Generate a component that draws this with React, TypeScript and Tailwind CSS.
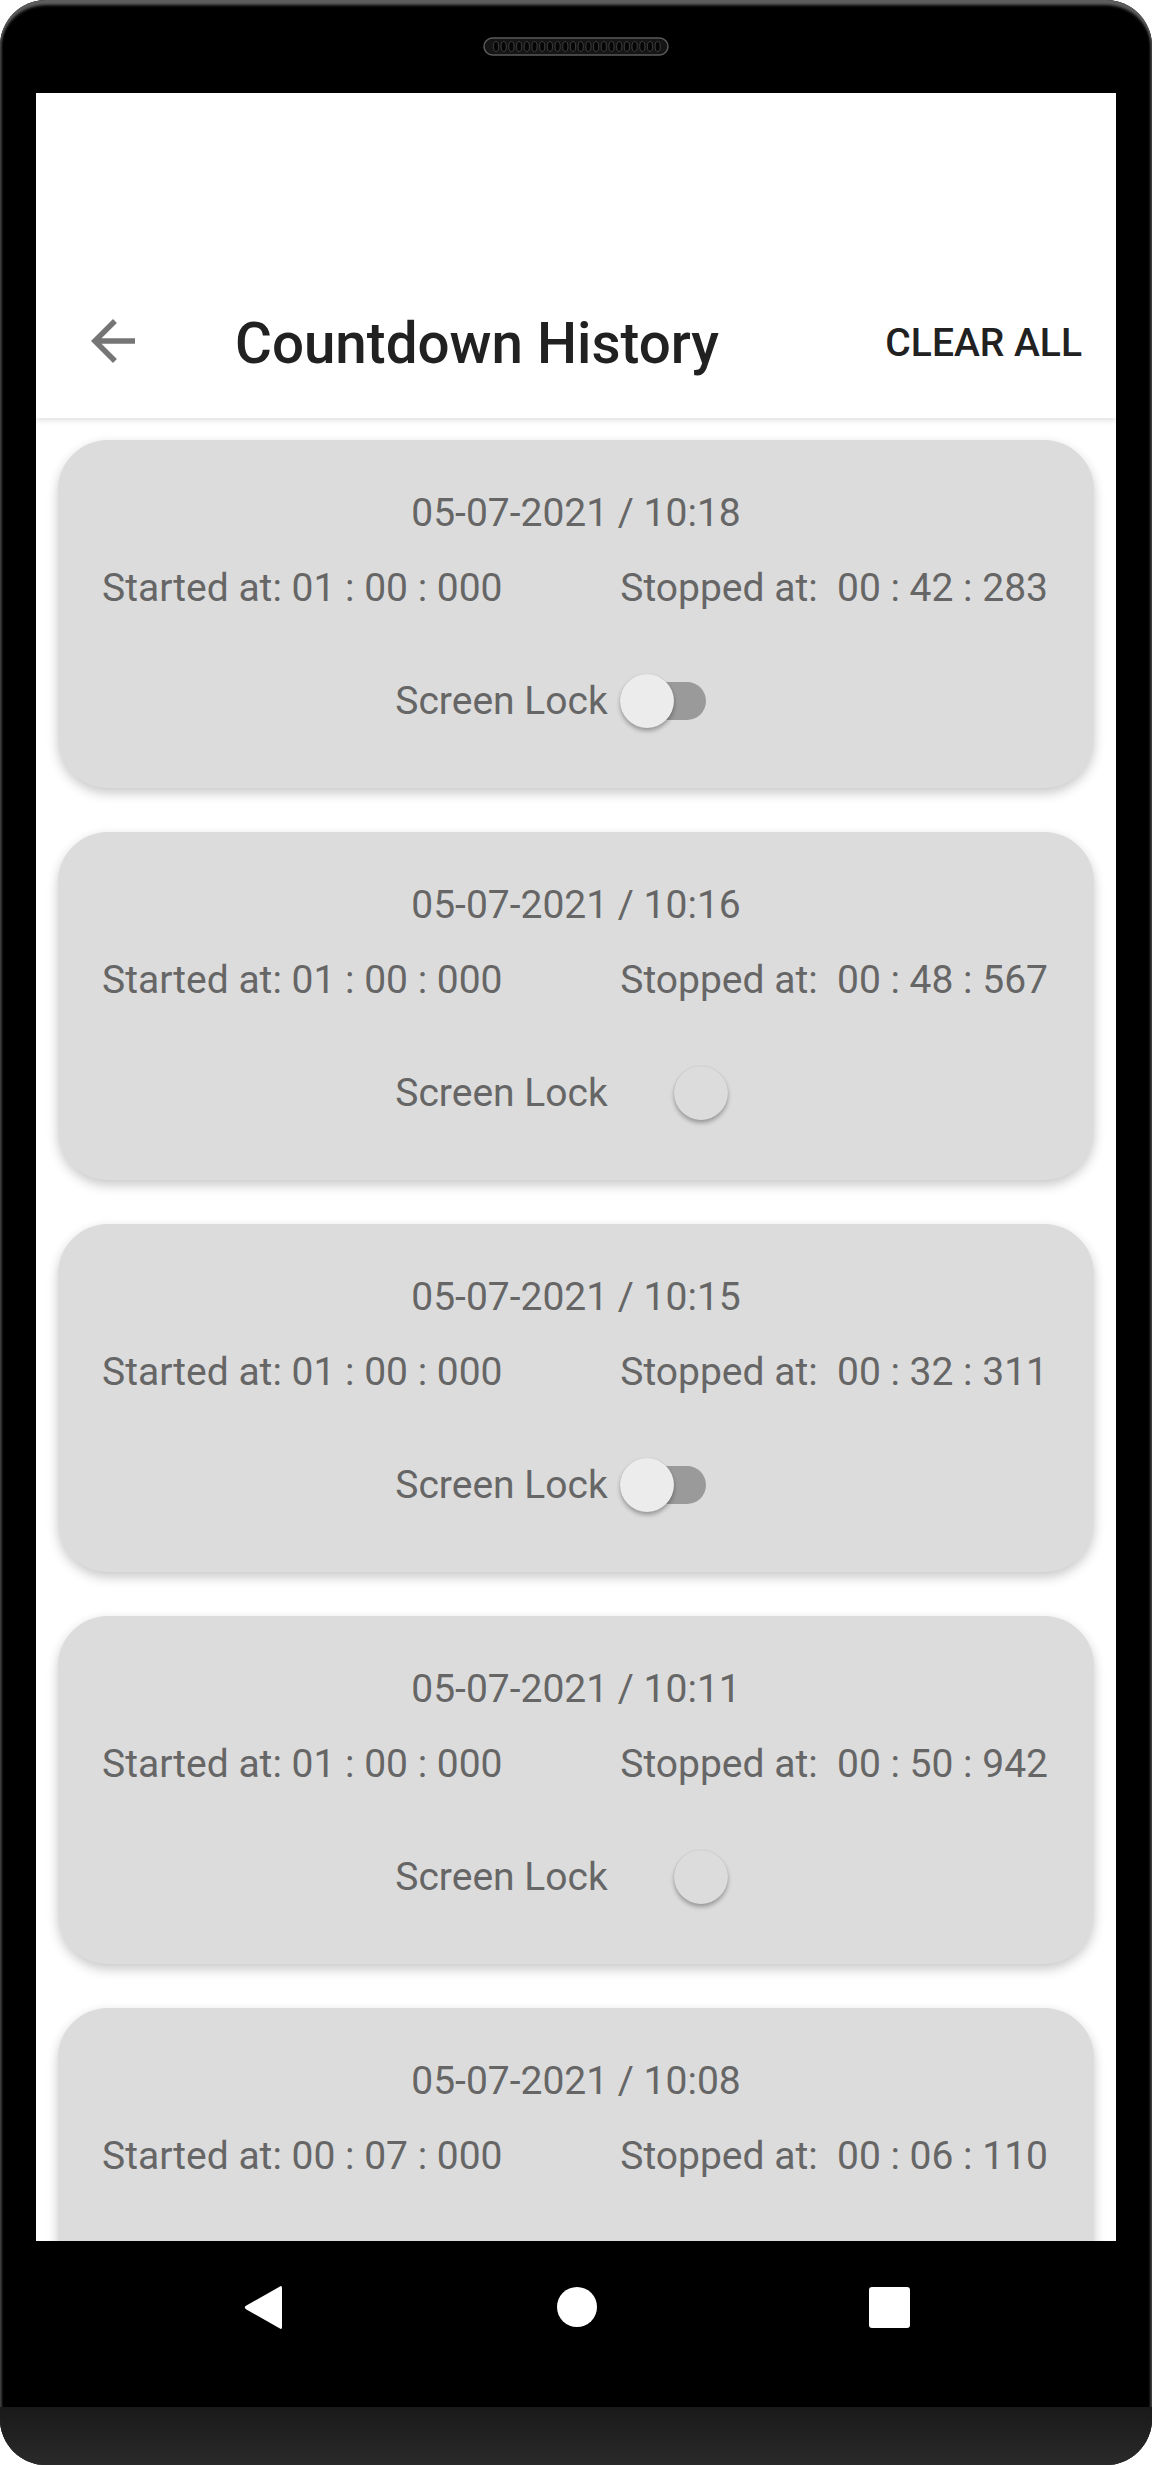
import React from "react";

type Entry = { time: string; start: string; stop: string; on: boolean };

const entries: Entry[] = [
  { time: "05-07-2021 / 10:18", start: "01 : 00 : 000", stop: "00 : 42 : 283", on: false },
  { time: "05-07-2021 / 10:16", start: "01 : 00 : 000", stop: "00 : 48 : 567", on: true },
  { time: "05-07-2021 / 10:15", start: "01 : 00 : 000", stop: "00 : 32 : 311", on: false },
  { time: "05-07-2021 / 10:11", start: "01 : 00 : 000", stop: "00 : 50 : 942", on: true },
  { time: "05-07-2021 / 10:08", start: "00 : 07 : 000", stop: "00 : 06 : 110", on: true },
];

function Speaker() {
  const holes = Array.from({ length: 22 }, (_, i) => i);
  return (
    <svg width="186" height="19" viewBox="0 0 186 19">
      <rect x="1" y="1" width="184" height="17" rx="8.5" fill="#151515" stroke="#5a5a5a" strokeWidth="1.5" />
      {holes.map((i) => (
        <ellipse key={i} cx={13 + i * 7.7} cy={9.5} rx={2.6} ry={5} fill="#050505" stroke="#4a4a4a" strokeWidth="0.8" />
      ))}
    </svg>
  );
}

function Toggle({ on }: { on: boolean }) {
  return (
    <div className="relative h-[54px] w-[149px] shrink-0">
      {!on && <div className="absolute left-[14px] top-[8px] h-[38px] w-[84px] rounded-full bg-[#9a9a9a]" />}
      <div
        className={
          on
            ? "absolute left-[66px] top-[0px] h-[54px] w-[54px] rounded-full bg-[#dcdcdc] shadow-[0_3px_4px_rgba(0,0,0,0.3),0_0_1px_rgba(0,0,0,0.15)]"
            : "absolute left-[12px] top-[0px] h-[54px] w-[54px] rounded-full bg-[#ececec] shadow-[0_3px_4px_rgba(0,0,0,0.3),0_0_1px_rgba(0,0,0,0.15)]"
        }
      />
    </div>
  );
}

function Card({ e }: { e: Entry }) {
  return (
    <div className="flex h-[348px] shrink-0 flex-col rounded-[50px] bg-[#dcdcdc] pt-[50px] text-[39px] leading-[46px] text-[#666666] shadow-[0_5px_12px_rgba(0,0,0,0.22)]">
      <div className="text-center">{e.time}</div>
      <div className="mt-[29px] flex justify-between pl-[44px] pr-[46px]">
        <span className="whitespace-pre">Started at: {e.start}</span>
        <span className="whitespace-pre">{"Stopped at:  " + e.stop}</span>
      </div>
      <div className="mt-[63px] flex h-[54px] items-center justify-center">
        <span>Screen Lock</span>
        <Toggle on={e.on} />
      </div>
    </div>
  );
}

export default function App() {
  return (
    <div className="h-[2465px] w-[1152px] bg-white font-['Roboto',sans-serif]">
      <div className="flex h-full w-full flex-col overflow-hidden rounded-[46px] bg-black shadow-[inset_0_6px_3px_-1px_#5e5e5e,inset_2px_0_2px_#3a3a3a,inset_-2px_0_2px_#3a3a3a]">
        {/* top bezel */}
        <div className="flex h-[93px] shrink-0 justify-center pt-[37px]">
          <Speaker />
        </div>

        {/* screen */}
        <div className="mx-[36px] flex flex-1 flex-col overflow-hidden bg-white">
          <div className="relative z-10 shrink-0 bg-white shadow-[0_2px_6px_rgba(0,0,0,0.14)]">
            <div className="h-[168px]" />
            <div className="flex h-[157px] items-center pl-[44px] pr-[34px]">
              <svg width="66" height="66" viewBox="0 0 24 24" className="mt-[3px] shrink-0">
                <path d="M20 11H7.83l5.59-5.59L12 4l-8 8 8 8 1.41-1.41L7.83 13H20v-2z" fill="#757575" />
              </svg>
              <div className="ml-[89px] mt-[8px] text-[56.5px] font-medium leading-[66px] text-[#212121]">Countdown History</div>
              <div className="ml-auto mt-[6px] text-[39px] font-medium leading-[46px] text-[#212121]">CLEAR ALL</div>
            </div>
          </div>
          <div className="flex flex-1 flex-col gap-[44px] overflow-hidden bg-white px-[22px] pt-[22px]">
            {entries.map((e, i) => (
              <Card key={i} e={e} />
            ))}
          </div>
        </div>

        {/* nav bar */}
        <div className="flex h-[166px] shrink-0 justify-center pt-[44px]">
          <div className="flex h-[44px] items-center gap-[272px]">
            <svg width="42" height="45" viewBox="0 0 42 45">
              <path d="M39 3 L39 42 Q39 45 36.5 43.3 L3 24.2 Q0.5 22.5 3 20.8 L36.5 1.7 Q39 0 39 3 Z" fill="#ffffff" />
            </svg>
            <div className="h-[40px] w-[40px] rounded-full bg-white" />
            <div className="h-[41px] w-[41px] rounded-[3px] bg-white" />
          </div>
        </div>

        {/* chin */}
        <div className="h-[58px] shrink-0 bg-gradient-to-b from-[#191919] to-[#2a2a2a]" />
      </div>
    </div>
  );
}
